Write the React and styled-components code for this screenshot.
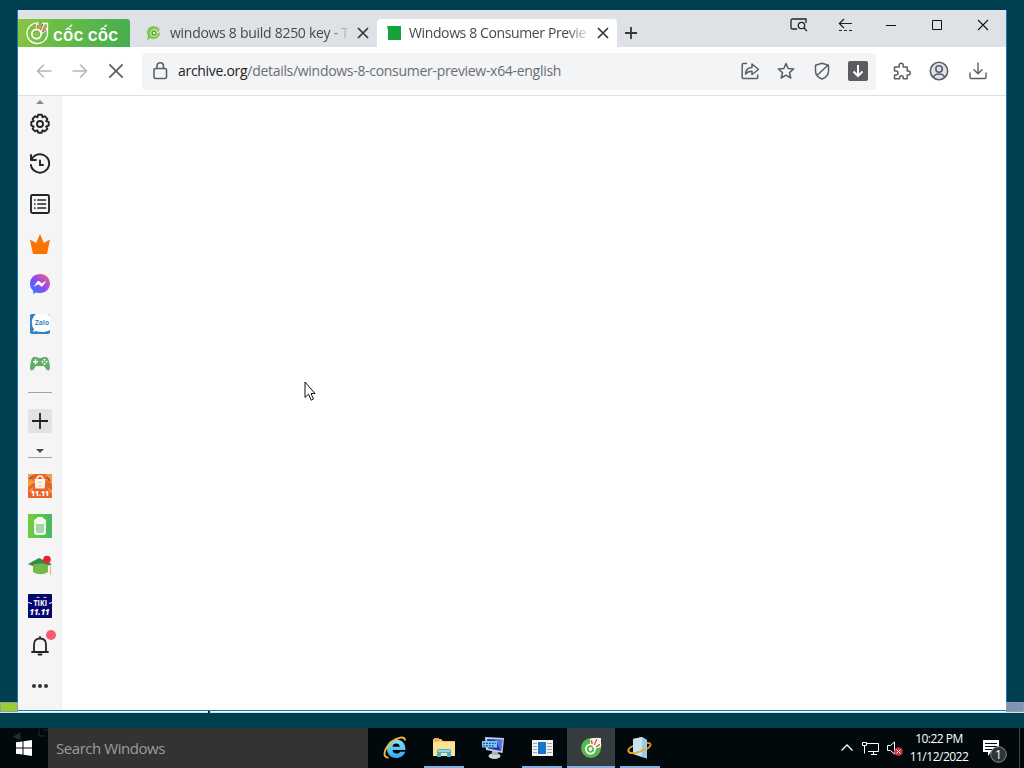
import React from "react"
import styled, { createGlobalStyle, css } from "styled-components"

const colors = {
  desktop: "#003f4f",
  frame: "#dee1e6",
  sidebar: "#f5f5f6",
  field: "#f3f4f6",
  icon: "#5b5f64",
  ink: "#222426",
}

const GlobalStyle = createGlobalStyle`
  * {
    box-sizing: border-box;
  }
  body {
    margin: 0;
    overflow: hidden;
    background: ${colors.desktop};
    font-family: "Open Sans", "Noto Sans", sans-serif;
  }
  svg {
    display: block;
    flex: none;
  }
`

const Desktop = styled.div`
  display: flex;
  flex-direction: column;
  position: relative;
  width: 1024px;
  height: 768px;
  overflow: hidden;
  background: ${colors.desktop};
`

const Window = styled.div`
  display: flex;
  flex-direction: column;
  width: 990px;
  height: 701px;
  margin: 10px 0 0 17px;
  border: 1px solid #1976a8;
  border-top: 0;
  background: #fff;
`

const TitleBar = styled.div`
  display: flex;
  height: 37px;
  flex: none;
  background: ${colors.frame};
`

const Logo = styled.div`
  display: flex;
  align-items: center;
  width: 112px;
  height: 28px;
  margin-top: 9px;
  padding-left: 7px;
  border-radius: 0 3px 0 0;
  background: linear-gradient(110deg, #8cc63f 0%, #6abd45 35%, #42ad51 100%);
  color: #fff;
`

const LogoText = styled.span`
  margin: 3px 0 0 4px;
  font: 600 17px/22px Inter, "Open Sans", sans-serif;
  letter-spacing: 0.1px;
  white-space: nowrap;
`

const Tab = styled.div`
  display: flex;
  align-items: center;
  width: ${(p) => p.$width}px;
  height: 28px;
  margin-top: 9px;
  padding: 0 8px 0 ${(p) => p.$pad}px;
  border-radius: 4px 4px 0 0;
  background: ${(p) => (p.$active ? "#fff" : "transparent")};
`

const TabTitle = styled.span`
  flex: 1;
  height: 24px;
  margin-left: 8px;
  color: #45494d;
  font-size: 14px;
  line-height: 24px;
  letter-spacing: ${(p) => p.$spacing}px;
  white-space: nowrap;
  mask-image: linear-gradient(to right, #000 ${(p) => p.$solid}px, transparent ${(p) => p.$solid + 24}px);
`

const NewTab = styled.div`
  display: flex;
  align-items: center;
  justify-content: center;
  width: 28px;
  height: 28px;
  margin-top: 9px;
`

const WindowButtons = styled.div`
  display: flex;
  margin-left: auto;
  height: 30px;
`

const WindowButton = styled.div`
  display: flex;
  align-items: center;
  justify-content: center;
  width: 46px;
`

const Toolbar = styled.div`
  display: flex;
  align-items: center;
  height: 49px;
  flex: none;
  padding-left: 8px;
  border-bottom: 1px solid #dcdfe3;
`

const ToolButton = styled.div`
  display: flex;
  align-items: center;
  justify-content: center;
  width: ${(p) => p.$width || 36}px;
  height: 36px;
  color: ${(p) => (p.$faded ? "#b4b6b9" : colors.icon)};
`

const AddressBar = styled.div`
  display: flex;
  align-items: center;
  width: 734px;
  height: 37px;
  margin: 0 7px 0 8px;
  border-radius: 4px;
  background: ${colors.field};
`

const Url = styled.span`
  flex: 1;
  color: #6a6e73;
  font-size: 14px;
  line-height: 22px;
  letter-spacing: -0.3px;
  white-space: nowrap;

  b {
    color: #222;
    font-weight: 400;
  }
`

const Body = styled.div`
  display: flex;
  flex: 1;
  min-height: 0;
`

const Sidebar = styled.div`
  display: flex;
  flex-direction: column;
  align-items: center;
  width: 44px;
  border-right: 1px solid #ececee;
  background: ${colors.sidebar};
`

const SideItem = styled.div`
  display: flex;
  align-items: center;
  justify-content: center;
  position: relative;
  width: 40px;
  height: 40px;
  flex: none;
  color: ${colors.ink};
`

const Arrow = styled.div`
  width: 0;
  height: 4px;
  border: 4px solid transparent;
  border-top-width: 0;
  border-bottom: 4px solid #858789;
  margin: 4px 0 0;

  ${(p) =>
    p.$down &&
    css`
      border-bottom: 0;
      border-top: 4px solid #4a4a4a;
      margin: 16px 0 4px;
    `}
`

const Divider = styled.div`
  width: 24px;
  height: 1px;
  flex: none;
  margin: ${(p) => p.$margin};
  background: #a3a4a6;
`

const AddButton = styled.div`
  display: flex;
  align-items: center;
  justify-content: center;
  width: 24px;
  height: 24px;
  flex: none;
  border-radius: 3px;
  background: #e2e2e3;
`

const Dot = styled.span`
  position: absolute;
  top: 4px;
  right: 4px;
  width: 10px;
  height: 10px;
  border-radius: 50%;
  background: #fb5c6c;
`

const Page = styled.div`
  flex: 1;
  background: #fff;
`

const WhiteLine = styled.div`
  height: 2px;
  flex: none;
  background: #f4fafb;
  border-bottom: 1px solid #cfdfe2;
`

const Scrap = styled.div`
  position: absolute;
  top: 702px;
  left: ${(p) => p.$left}px;
  width: ${(p) => p.$width}px;
  height: 10px;
  border: 1px solid #8ba0ad;
  background: ${(p) => p.$fill};
`

const Speck = styled.div`
  position: absolute;
  top: 711px;
  left: 208px;
  width: 2px;
  height: 2px;
  background: #002b3c;
`

const Cursor = styled.svg`
  position: absolute;
  left: 304px;
  top: 381px;
`

const Taskbar = styled.div`
  display: flex;
  height: 40px;
  flex: none;
  margin-top: auto;
  background: #02090d;
`

const StartButton = styled.div`
  display: flex;
  align-items: center;
  justify-content: center;
  position: relative;
  width: 48px;
`

const Ghost = styled.svg`
  position: absolute;
  left: 12px;
  top: 0;
`

const SearchBox = styled.div`
  width: 320px;
  padding: 0 8px;
  background: #333;
  color: #9c9c9c;
  font-size: 15px;
  line-height: 41px;
  letter-spacing: -0.45px;
`

const Apps = styled.div`
  display: flex;
  margin-left: 3px;
`

const AppButton = styled.div`
  display: flex;
  align-items: center;
  justify-content: center;
  position: relative;
  width: 48px;
  margin-right: 1px;
  background: ${(p) => (p.$active ? "#353b3e" : "transparent")};

  &::after {
    content: "";
    position: absolute;
    bottom: 0;
    left: ${(p) => (p.$active ? 0 : 4)}px;
    right: ${(p) => (p.$active ? 0 : 4)}px;
    height: 2px;
    background: ${(p) => (p.$running ? "#7fb2e0" : "transparent")};
  }
`

const Tray = styled.div`
  display: flex;
  align-items: center;
  margin-left: auto;
  color: #fff;
`

const Clock = styled.div`
  width: 64px;
  margin: 0 11px 0 3px;
  font-size: 12px;
  line-height: 18px;
  letter-spacing: -0.5px;
  text-align: center;
  white-space: nowrap;
`

const ShowDesktop = styled.div`
  width: 5px;
  height: 40px;
  margin-left: 11px;
  border-left: 1px solid #3f4649;
`

const Line = ({ size = 20, box = 20, width = 1.6, children }) => (
  <svg
    width={size}
    height={size}
    viewBox={`0 0 ${box} ${box}`}
    fill="none"
    stroke="currentColor"
    strokeWidth={width}
    strokeLinecap="round"
    strokeLinejoin="round"
  >
    {children}
  </svg>
)

const Cross = ({ size = 12, color = "#33373b", width = 1.7 }) => (
  <svg width={size} height={size} viewBox="0 0 12 12" stroke={color} strokeWidth={width}>
    <path d="M1 1l10 10M11 1L1 11" />
  </svg>
)

const CocCocMark = ({ size = 24, outline }) => (
  <svg width={size} height={size} viewBox="0 0 24 24" fill="none">
    {outline ? (
      <path d="M13.500 2A10.300 10.300 0 1 0 22.500 11V2.500h-5" stroke="#fff" strokeWidth="1.300" />
    ) : (
      <path d="M12 2h10v10A10 10 0 1 1 12 2z" fill="#55b948" />
    )}
    {!outline && <path d="M12.500 2H22v9.500l-8 .5z" fill="#eef5e8" />}
    <circle cx="11.500" cy="13" r="4.600" stroke="#fff" strokeWidth="1.800" />
    <circle cx="11.500" cy="13" r="1.900" fill={outline ? "#8bca5e" : "#e8f5e2"} />
    <path d="M13 9l-1-6M15 10l4-8M16 12l6-4" stroke="#fff" strokeWidth="2.400" />
    <path d="M13.200 8l-.8-4M15.200 9l2.800-6M17 11l4-2.600" stroke="#df4b36" strokeWidth="1.300" />
  </svg>
)

const Favicon = () => (
  <svg width="16" height="16" viewBox="0 0 16 16" fill="none">
    <path d="M1 15.500l1-4.500A6.500 6.500 0 1 1 7.500 14q-2 0-3-1z" fill="#7cc84a" />
    <circle cx="8" cy="8" r="3.300" fill="#4aa63c" stroke="#d9efcf" />
    <circle cx="8" cy="8" r="1.200" fill="#e9f5e4" />
    <path d="M9 5l1-4M10 6l4-4M11 8l4-2" stroke="#f5e9e3" strokeWidth="1.300" />
    <path d="M9.500 4.500l.8-3M11 5.300l2.300-2.600" stroke="#7d5a3c" strokeWidth=".8" />
  </svg>
)

const GearIcon = () => (
  <Line size={22} box={22} width={1.9}>
    <path d="M9.200 1.800h3.600l.7 2.500 2.300-1.100 2.600 2.600-1.200 2.300 2.500.8v3.800l-2.500.8 1.200 2.400-2.600 2.500-2.300-1.100-.7 2.400H9.200l-.8-2.400-2.300 1.100-2.500-2.500 1.100-2.400-2.400-.8V8.900l2.400-.8-1.100-2.300 2.500-2.600 2.300 1.100z" />
    <circle cx="11" cy="11" r="3" />
  </Line>
)

const HistoryIcon = () => (
  <Line size={22} box={22} width={1.9}>
    <path d="M2 2v5h5M2.500 6.800A9.200 9.200 0 1 1 1.900 12" />
    <path d="M11 7.500v4.500h3" strokeLinejoin="miter" />
  </Line>
)

const ListIcon = () => (
  <Line size={22} box={22} width={1.9}>
    <rect x="2" y="2" width="18" height="18" rx="1.500" />
    <path d="M9 7h7.500M9 11h7.500M9 15h7.500M5.700 7h.2M5.700 11h.2M5.700 15h.2" strokeWidth="1.700" />
  </Line>
)

const CrownIcon = () => (
  <svg width="22" height="22" viewBox="0 0 22 22">
    <path d="M4 21L.9 6.500 7.200 10 11 1 14.800 10 21 6.500l-3 14.500z" fill="#fb7303" />
  </svg>
)

const MessengerIcon = () => (
  <svg width="22" height="22" viewBox="0 0 22 22">
    <defs>
      <linearGradient id="msg" x1="0" y1="1" x2="1" y2="0">
        <stop offset="0" stopColor="#1689ff" />
        <stop offset=".5" stopColor="#9146f4" />
        <stop offset="1" stopColor="#ff6570" />
      </linearGradient>
    </defs>
    <path d="M11 1C5.200 1 1 5.200 1 10.700c0 2.900 1.100 5.400 3.200 7.100V21l3-1.400c1.200.4 2.400.5 3.800.5 5.800 0 10-4.200 10-9.500C21 5.200 16.800 1 11 1z" fill="url(#msg)" />
    <path d="M4.800 13.800l3.600-5.600 1.600-.2 2.600 2.200 4.700-2.500-3.600 5.600-1.600.2-2.600-2.200z" fill="#fff" />
  </svg>
)

const ZaloIcon = () => (
  <svg width="22" height="22" viewBox="0 0 22 22">
    <rect x="1" y="1" width="20" height="20" rx="2" fill="#3182c5" />
    <path d="M7 1h11a3 3 0 0 1 3 3v13c-3 2-10 3-14 1l-3 1 1-3C1 11 3 4 7 1z" fill="#fff" />
    <text x="6" y="11.800" fontFamily="Open Sans" fontWeight="700" fontSize="7" textLength="14" lengthAdjust="spacingAndGlyphs" fill="#3388c8">Zalo</text>
  </svg>
)

const GamepadIcon = () => (
  <svg width="22" height="16" viewBox="0 0 22 16">
    <path d="M5 1h3l1 1h4l1-1h3c2 0 3 3 3.700 8 .6 4 0 5-1.200 5.400-1.500.5-3-2-4.500-4.400H7c-1.500 2.400-3 4.900-4.500 4.400C1.200 14 .7 13 1.300 9 2 4 3 1 5 1z" fill="#61ad66" />
    <path d="M6.500 3.300v5M4 5.800h5" stroke="#fff" strokeWidth="1.500" />
    <g fill="#fff">
      <circle cx="15.500" cy="3.700" r="1" />
      <circle cx="15.500" cy="7.900" r="1" />
      <circle cx="13.400" cy="5.800" r="1" />
      <circle cx="17.600" cy="5.800" r="1" />
    </g>
  </svg>
)

const ShopeeIcon = () => (
  <svg width="24" height="24" viewBox="0 0 24 24">
    <rect width="24" height="24" fill="#e9632b" />
    <path d="M0 0h6L3 5l4 3-7 5zM18 0h6v10l-5-4zM0 17l5-4v5zM19 13l5 3v5z" fill="#f79a3a" />
    <path d="M1 5l4-3M19 3l3 4" stroke="#755274" strokeWidth="1.500" />
    <path d="M6.500 5h11l-.8 9.500H7.300z" fill="#fff5e6" />
    <path d="M9 5c0-4 6-4 6 0" stroke="#fff5e6" strokeWidth="1.500" fill="none" />
    <path d="M10.500 8.500h3M10.500 12h3" stroke="#f5ba8b" />
    <text x="3" y="21.500" fontFamily="Open Sans" fontWeight="800" fontSize="7.500" textLength="18" lengthAdjust="spacingAndGlyphs" fill="#fff">11.11</text>
  </svg>
)

const BatteryIcon = () => (
  <svg width="24" height="24" viewBox="0 0 24 24">
    <defs>
      <linearGradient id="bat">
        <stop offset="0" stopColor="#79c943" />
        <stop offset="1" stopColor="#43ba61" />
      </linearGradient>
    </defs>
    <rect width="24" height="24" fill="url(#bat)" />
    <path d="M9 3h6v1.500q3 0 3 3V18q0 3-3 3H9q-3 0-3-3V7.500q0-3 3-3z" fill="#f3fcec" />
    <path d="M8 10h8v7q0 2-2 2h-4q-2 0-2-2z" fill="#a5d7a2" />
  </svg>
)

const StudyIcon = () => (
  <svg width="24" height="24" viewBox="0 0 24 24">
    <path d="M0 10l11-6 13 6-12 5z" fill="#338a4b" />
    <path d="M5 11c4-2 11-2 15 0v7c-5 3-10 3-15 0z" fill="#72ba4c" />
    <path d="M21.500 11l1 1v9" stroke="#ebb35e" fill="none" />
    <circle cx="19" cy="5.500" r="3.800" fill="#ee1e2b" />
  </svg>
)

const TikiIcon = () => (
  <svg width="24" height="24" viewBox="0 0 24 24" fill="#fff" fontFamily="Open Sans">
    <rect width="24" height="24" rx="1" fill="#050570" />
    <path d="M0 8l4 1v1L0 9zM24 8l-3 1v1l3-1zM8 4l2-1.500L12 4h-1l-1-.6L9 4zM15 4l2-1.500L19 4h-1l-1-.6-1 .6z" />
    <text x="5.500" y="11.500" fontSize="8" fontWeight="700" textLength="13.500" lengthAdjust="spacingAndGlyphs">TIKI</text>
    <text x="1.500" y="21" fontSize="9" fontWeight="800" fontStyle="italic" textLength="20" lengthAdjust="spacingAndGlyphs">11.11</text>
  </svg>
)

const BellIcon = () => (
  <Line size={22} box={22} width={1.8}>
    <path d="M3 17h16M5 17V9.500C5 5.500 7.500 3.500 11 3.500s6 2 6 6V17M11 3.500V2" />
    <path d="M9.500 19.500h3" strokeWidth="2" />
  </Line>
)

const DotsIcon = () => (
  <svg width="18" height="6" viewBox="0 0 18 6" fill="#333">
    <circle cx="3" cy="3" r="2" />
    <circle cx="9" cy="3" r="2" />
    <circle cx="15" cy="3" r="2" />
  </svg>
)

const IeIcon = () => (
  <svg width="24" height="24" viewBox="0 0 24 24" fill="none">
    <defs>
      <linearGradient id="ie" x1="0" y1="0" x2="0" y2="1">
        <stop offset="0" stopColor="#8fe0fb" />
        <stop offset="1" stopColor="#2fa9e6" />
      </linearGradient>
    </defs>
    <path
      d="M13 3.500c5.500 0 9.500 3.500 9.500 10.500H9.500c.3 2.400 1.800 3.600 4 3.600 1.800 0 3-.7 3.600-1.900h5c-1.200 3.900-4.400 6.300-8.800 6.300C7.700 22 4 18.200 4 12.800S7.800 3.500 13 3.500zm.2 4c-2 0-3.300 1.100-3.700 3.300h7.300c-.3-2.200-1.600-3.300-3.600-3.300z"
      fill="url(#ie)"
      fillRule="evenodd"
    />
    <path d="M5.500 21.500C-1 22 1 13 7.500 7S22-.5 22 4.500" stroke="#efb936" strokeWidth="1.900" />
  </svg>
)

const FolderIcon = () => (
  <svg width="24" height="22" viewBox="0 0 24 22">
    <path d="M1 2h8l2 2h12v15H1z" fill="#f0c75e" />
    <path d="M2 1h5v3H2z" fill="#f2a765" />
    <path d="M1 5h22v14H1z" fill="#fce392" />
    <path d="M5 20v-6q0-2 2-2h10q2 0 2 2v6h-4v-4H9v4z" fill="#4aaed4" />
    <path d="M6 13h12v2H6z" fill="#90d5e9" />
  </svg>
)

const ScreensIcon = () => (
  <svg width="26" height="26" viewBox="0 0 26 26">
    <ellipse cx="14.500" cy="21" rx="6" ry="3" fill="#d2d5d8" />
    <path d="M12 16h6v4h-6z" fill="#aab0b6" />
    <path d="M5 2l19 1-1.500 15L6 15z" fill="#c9cfe4" />
    <path d="M7 4l15.500.7L21 16 8 13.500z" fill="#2138b4" />
    <path d="M15 4.400l7.500.3L21 16z" fill="#5875dc" />
    <path d="M2 6h15v6.500H2z" fill="#81c7f0" />
    <path d="M3 8.300h13M3 10.800h12" stroke="#235caa" strokeWidth="1.300" strokeDasharray="2 1" />
  </svg>
)

const NewsIcon = () => (
  <svg width="21" height="16" viewBox="0 0 21 16">
    <path d="M0 0h21v16H0z" fill="#f3f3ee" />
    <path d="M6 2h8v12H6z" fill="#1376cf" />
    <path d="M1 3.500h4M1 6.500h4M1 9.500h4M1 12.500h4M15 3.500h5M15 6.500h5M15 9.500h5M15 12.500h5" stroke="#9aa7ad" />
  </svg>
)

const SetupIcon = () => (
  <svg width="26" height="26" viewBox="0 0 26 26" fill="none">
    <path d="M19 8c8-1 5 5-4 8" stroke="#d9952c" strokeWidth="1.800" />
    <path d="M6 4l9-2 5 3v18.500l-4-1L6 19z" fill="#77aecb" />
    <path d="M6 4l9-2v19.500L6 19z" fill="#c5e4f0" />
    <path d="M15 2l5 3v18.500l-5-2z" fill="#a3cbdf" />
    <path d="M6 11c-7 3-6 8 2 7 4-.7 8-2.500 11-4.500" stroke="#eaa62e" strokeWidth="1.800" />
  </svg>
)

const sideItems = [GearIcon, HistoryIcon, ListIcon, CrownIcon, MessengerIcon, ZaloIcon, GamepadIcon]
const promoItems = [ShopeeIcon, BatteryIcon, StudyIcon, TikiIcon]

const taskbarApps = [
  { id: "ie", Icon: IeIcon },
  { id: "explorer", Icon: FolderIcon, running: true },
  { id: "screens", Icon: ScreensIcon },
  { id: "news", Icon: NewsIcon, running: true },
  { id: "coccoc", Icon: CocCocMark, running: true, active: true },
  { id: "setup", Icon: SetupIcon, running: true },
]

function BrowserTitleBar() {
  return (
    <TitleBar>
      <Logo>
        <CocCocMark outline />
        <LogoText>cốc cốc</LogoText>
      </Logo>
      <Tab $width={247} $pad={16}>
        <Favicon />
        <TabTitle $solid={158} $spacing={-0.28}>windows 8 build 8250 key - T</TabTitle>
        <Cross />
      </Tab>
      <Tab $active $width={240} $pad={10}>
        <svg width="14" height="14" viewBox="0 0 14 14">
          <path d="M0 0h14v14H1V4z" fill="#15a239" />
        </svg>
        <TabTitle $solid={158} $spacing={-0.38}>Windows 8 Consumer Previe</TabTitle>
        <Cross />
      </Tab>
      <NewTab>
        <svg width="12" height="12" viewBox="0 0 12 12" stroke="#33373b" strokeWidth="1.800">
          <path d="M6 0v12M0 6h12" />
        </svg>
      </NewTab>
      <WindowButtons>
        <WindowButton>
          <svg width="18" height="14" viewBox="0 0 18 14" fill="none" stroke="#222" strokeWidth="1.300">
            <path d="M7 11H2.500Q1 11 1 9.500v-7Q1 1 2.500 1H16v4" />
            <circle cx="11.500" cy="7.500" r="3.200" />
            <path d="M14 10l3 3" />
          </svg>
        </WindowButton>
        <WindowButton>
          <svg width="14" height="14" viewBox="0 0 14 14" fill="none" stroke="#222" strokeWidth="1.200">
            <path d="M14 5.500H1M6 1L1.300 5.500 6 10" />
            <path d="M1 12.500h13" strokeDasharray="3 2" />
          </svg>
        </WindowButton>
        <WindowButton>
          <svg width="10" height="10"><path d="M0 5.500h10" stroke="#111" /></svg>
        </WindowButton>
        <WindowButton>
          <svg width="10" height="10"><path d="M.5.5h9v9h-9z" stroke="#111" fill="none" /></svg>
        </WindowButton>
        <WindowButton>
          <Cross color="#111" width={1.1} />
        </WindowButton>
      </WindowButtons>
    </TitleBar>
  )
}

function BrowserToolbar() {
  return (
    <Toolbar>
      <ToolButton $faded>
        <Line><path d="M17 10H3.500M9.500 4l-6 6 6 6" /></Line>
      </ToolButton>
      <ToolButton $faded>
        <Line><path d="M3 10h13.500M10.500 4l6 6-6 6" /></Line>
      </ToolButton>
      <ToolButton>
        <Cross size={16} color={colors.icon} width={1.3} />
      </ToolButton>
      <AddressBar>
        <ToolButton>
          <Line>
            <rect x="4" y="7.500" width="12.500" height="10" rx="1.500" />
            <path d="M7 7.500V5a3.200 3.200 0 0 1 6.500 0v2.500" />
          </Line>
        </ToolButton>
        <Url><b>archive.org</b>/details/windows-8-consumer-preview-x64-english</Url>
        <ToolButton>
          <Line width={1.5}>
            <path d="M6.500 2.500H3.200q-1 0-1 1v13q0 1 1 1h13.500q1 0 1-1V14" />
            <path d="M5.500 13C6 8.500 8.500 6.500 12 6.500V3l6.500 5.500-6.500 5v-3.300c-3 0-5 .8-6.500 2.800z" />
          </Line>
        </ToolButton>
        <ToolButton>
          <Line width={1.5}>
            <path d="M10 2.500l2.200 5 5.500.5-4.200 3.600 1.300 5.400-4.800-2.900L5.200 17l1.300-5.400L2.300 8l5.500-.5z" />
          </Line>
        </ToolButton>
        <ToolButton>
          <Line width={1.5}>
            <path d="M10 2.300l6.500 2V10c0 4-2.500 6.500-6.500 8-4-1.500-6.500-4-6.500-8V4.300zM5 14.500L15 5" />
          </Line>
        </ToolButton>
        <ToolButton>
          <svg width="20" height="20" viewBox="0 0 20 20" fill="none">
            <rect width="20" height="20" rx="2" fill="#5a5c5f" />
            <path d="M10 4v11M5.500 10.500L10 15l4.500-4.500" stroke="#fff" strokeWidth="2" />
          </svg>
        </ToolButton>
      </AddressBar>
      <ToolButton $width={37}>
        <Line width={1.5}>
          <path d="M2.500 6h4.700V4.300a2 2 0 1 1 4 0V6h4v4h1a2 2 0 1 1 0 4h-1v3.700h-4v-1.200a1.700 1.700 0 0 0-3.500 0v1.200H2.500V14H4a2 2 0 0 0 0-4H2.500z" />
        </Line>
      </ToolButton>
      <ToolButton $width={38}>
        <Line width={1.6}>
          <circle cx="10" cy="10" r="8.700" fill="#dbe3ec" />
          <circle cx="10" cy="8" r="3.200" />
          <path d="M4.500 16c1.500-4 9.500-4 11 0" />
        </Line>
      </ToolButton>
      <ToolButton $width={39}>
        <Line width={1.4}>
          <path d="M2 12v4.500q0 1 1 1h14q1 0 1-1V12M10 2v10.500M6 8.700l4 4 4-4" />
        </Line>
      </ToolButton>
    </Toolbar>
  )
}

function BrowserSidebar() {
  return (
    <Sidebar>
      <Arrow />
      {sideItems.map((Icon, i) => (
        <SideItem key={i}><Icon /></SideItem>
      ))}
      <Divider $margin="8px 0 16px" />
      <AddButton>
        <svg width="16" height="16" stroke="#222" strokeWidth="1.800">
          <path d="M8 0v16M0 8h16" />
        </svg>
      </AddButton>
      <Arrow $down />
      <Divider $margin="0 0 8px" />
      {promoItems.map((Icon, i) => (
        <SideItem key={i}><Icon /></SideItem>
      ))}
      <SideItem>
        <BellIcon />
        <Dot />
      </SideItem>
      <SideItem><DotsIcon /></SideItem>
    </Sidebar>
  )
}

function SystemTaskbar() {
  return (
    <Taskbar>
      <StartButton>
        <Ghost width="36" height="14" viewBox="0 0 36 14" fill="none" stroke="#1f2a2d">
          <path d="M1 9l7-4v7" fill="#1f2a2d" />
          <path d="M27 1v7h7M31 2h5" />
        </Ghost>
        <svg width="16" height="16" viewBox="0 0 16 16" fill="#fff">
          <path d="M0 2.300l6.500-.9v6.100H0zM7.500 1.200L16 0v7.500H7.500zM0 8.500h6.500v6.100L0 13.700zM7.500 8.500H16V16l-8.500-1.200z" />
        </svg>
      </StartButton>
      <SearchBox>Search Windows</SearchBox>
      <Apps>
        {taskbarApps.map(({ id, Icon, running, active }) => (
          <AppButton key={id} $running={running} $active={active}>
            <Icon />
          </AppButton>
        ))}
      </Apps>
      <Tray>
        <svg width="68" height="18" viewBox="0 0 68 18" fill="none" stroke="#fff">
          <path d="M5.500 11.500L11 6l5.500 5.500" strokeWidth="1.300" />
          <path d="M31 4.500h11.500v8H32M35 15.500h6M37.500 12.500v3M26.500 3.500h4v3h-4zM28.500 6.500v8" />
          <path d="M51.500 6.500h3l4-3.500v12l-4-3.500h-3z" />
          <circle cx="62.500" cy="12.500" r="4.300" fill="#c9303c" stroke="none" />
          <path d="M60.500 10.500l4 4M64.500 10.500l-4 4" />
        </svg>
        <Clock>10:22 PM<br />11/12/2022</Clock>
        <svg width="26" height="30" viewBox="0 0 26 30">
          <path d="M1 7h16v12H9l-3 4v-4H1z" fill="#fff" />
          <path d="M3 10.500h12M3 13.500h12M3 16.500h8" stroke="#02090d" />
          <circle cx="16.500" cy="21.500" r="7.800" fill="#303638" stroke="#858a8c" />
          <text x="16.500" y="26" fontFamily="Open Sans" fontSize="12" fill="#fff" textAnchor="middle">1</text>
        </svg>
        <ShowDesktop />
      </Tray>
    </Taskbar>
  )
}

export default function App() {
  return (
    <>
      <GlobalStyle />
      <Desktop>
        <Window>
          <BrowserTitleBar />
          <BrowserToolbar />
          <Body>
            <BrowserSidebar />
            <Page />
          </Body>
        </Window>
        <WhiteLine />
        <Scrap $left={0} $width={18} $fill="#9acd32" />
        <Scrap $left={1006} $width={18} $fill="#8094b0" />
        <Speck />
        <SystemTaskbar />
        <Cursor width="14" height="21" viewBox="0 0 14 21">
          <path d="M1 1v15.500l3.500-3.300 2.700 6 2.200-1.200-2.400-5.500H11z" fill="#fff" stroke="#111" />
        </Cursor>
      </Desktop>
    </>
  )
}
